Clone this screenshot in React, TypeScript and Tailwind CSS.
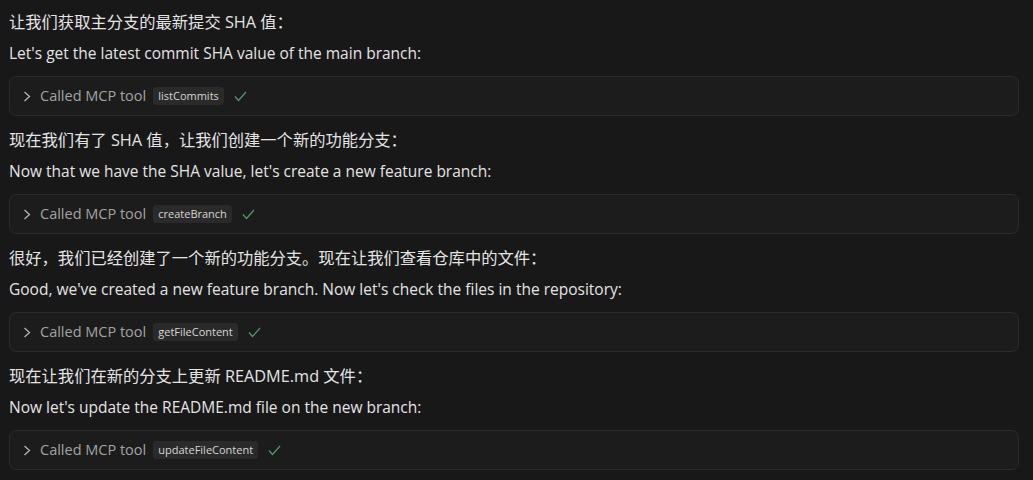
interface StepProps {
    zh: string;
    en: string;
    tool: string;
}

const steps: StepProps[] = [
    {
        zh: "让我们获取主分支的最新提交 SHA 值：",
        en: "Let's get the latest commit SHA value of the main branch:",
        tool: "listCommits",
    },
    {
        zh: "现在我们有了 SHA 值，让我们创建一个新的功能分支：",
        en: "Now that we have the SHA value, let's create a new feature branch:",
        tool: "createBranch",
    },
    {
        zh: "很好，我们已经创建了一个新的功能分支。现在让我们查看仓库中的文件：",
        en: "Good, we've created a new feature branch. Now let's check the files in the repository:",
        tool: "getFileContent",
    },
    {
        zh: "现在让我们在新的分支上更新 README.md 文件：",
        en: "Now let's update the README.md file on the new branch:",
        tool: "updateFileContent",
    },
];

const ToolCall = ({ tool }: { tool: string }) => {
    return (
        <div className="flex items-center h-[40px] mr-[14px] rounded-[7px] border border-[#2b2b2b] bg-[#1c1c1c] pl-[13px]">
            {/* chevron */}
            <svg width="8" height="11" viewBox="0 0 8 11" fill="none" className="text-[#b4b4b4]">
                <polyline points="1.5,1 6.5,5.5 1.5,10" stroke="currentColor" strokeWidth="1.3" />
            </svg>
            <span className="ml-[9px] text-[14.5px] text-[#a3a3a3]">Called MCP tool</span>
            <span className="ml-[7px] rounded-[3px] bg-[#2a2a2a] px-[5px] h-[18px] flex items-center text-[11px] text-[#d6d6d6]">
                {tool}
            </span>
            {/* check */}
            <svg width="13" height="11" viewBox="0 0 13 11" fill="none" className="ml-[10px] text-[#4f9a6b]">
                <polyline points="1,5.5 4.5,9.5 12,1" stroke="currentColor" strokeWidth="1.2" />
            </svg>
        </div>
    );
};

export default function App() {
    return (
        <div
            className="min-h-screen w-full bg-[#181818] pl-[9px] pt-[12px] flex flex-col text-[#e4e4e4]"
            style={{ fontFamily: '"Open Sans", "Noto Sans CJK SC", sans-serif' }}
        >
            {steps.map((s) => (
                <div key={s.tool} className="flex flex-col mb-[14px]">
                    <p className="text-[16.3px] leading-[20px]">{s.zh}</p>
                    <p className="mt-[11px] text-[15.5px] leading-[20px]">{s.en}</p>
                    <div className="mt-[13px]">
                        <ToolCall tool={s.tool} />
                    </div>
                </div>
            ))}
        </div>
    );
}
